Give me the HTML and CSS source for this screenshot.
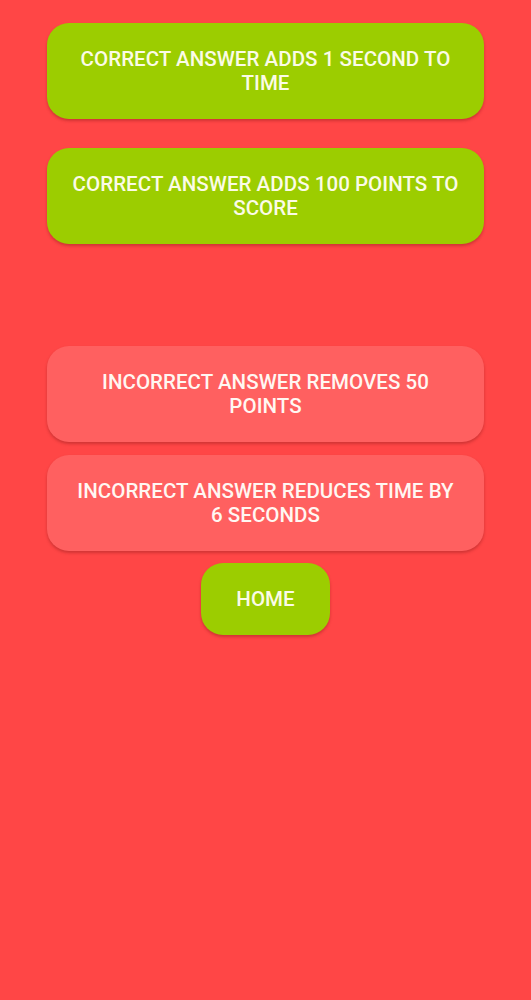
FILE: index.html
```html
<!DOCTYPE html>
<html>
<head>
<meta charset="utf-8">
<link rel="stylesheet" href="styles.css">
</head>
<body>
<main class="screen">
  <div class="btn btn-green">CORRECT ANSWER ADDS 1 SECOND TO TIME</div>
  <div class="btn btn-green gap-sm">CORRECT ANSWER ADDS 100 POINTS TO SCORE</div>
  <div class="btn btn-red gap-lg">INCORRECT ANSWER REMOVES 50 POINTS</div>
  <div class="btn btn-red gap-xs">INCORRECT ANSWER REDUCES TIME BY 6 SECONDS</div>
  <div class="btn btn-green btn-home gap-xs">HOME</div>
</main>
</body>
</html>
```
FILE: styles.css
```css
html, body {
  margin: 0;
  padding: 0;
  background: #ff4646;
}
.screen {
  width: 531px;
  height: 1000px;
  box-sizing: border-box;
  padding: 23px 47px 0;
  display: flex;
  flex-direction: column;
  align-items: center;
  font-family: Roboto, "Liberation Sans", sans-serif;
}
.btn {
  box-sizing: border-box;
  width: 437px;
  height: 96px;
  padding: 0 23.5px;
  border-radius: 22px;
  display: flex;
  align-items: center;
  justify-content: center;
  text-align: center;
  font-size: 20.5px;
  font-weight: 500;
  line-height: 24px;
  letter-spacing: 0.05px;
  box-shadow: 0 2px 3px rgba(120, 20, 20, 0.35);
}
.btn-green {
  background: #9ccd00;
  color: #fbfbe6;
}
.btn-red {
  background: #ff6060;
  color: #fff7f2;
}
.btn-home {
  width: 129px;
  height: 72px;
  padding: 0;
}
.gap-sm { margin-top: 29px; }
.gap-lg { margin-top: 102px; }
.gap-xs { margin-top: 12.5px; }
```
